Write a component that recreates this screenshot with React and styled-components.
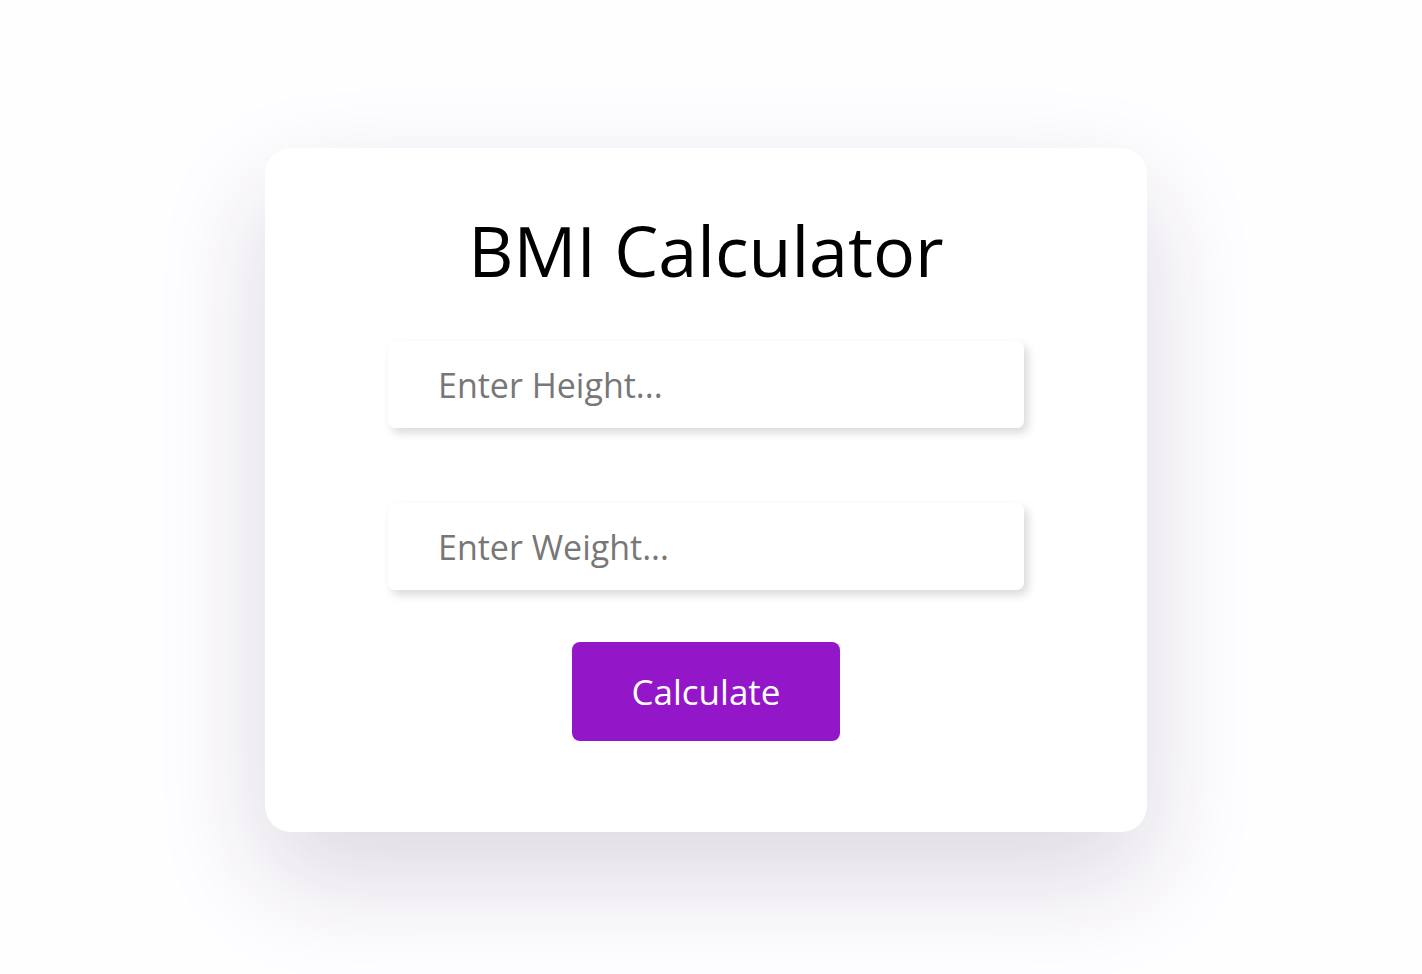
import React, { useState } from 'react'
import styled, { createGlobalStyle } from 'styled-components'

const GlobalStyle = createGlobalStyle`
  * {
    box-sizing: border-box;
  }

  body {
    margin: 0;
    background: #fefdff;
    font-family: "Open Sans", "Liberation Sans", sans-serif;
  }
`

const Page = styled.div`
  min-height: 100vh;
  display: flex;
  align-items: center;
  justify-content: center;
  padding: 6px 10px 0 0;
`

const Card = styled.div`
  width: 882px;
  height: 684px;
  background: #ffffff;
  border-radius: 26px;
  box-shadow: 0 45px 110px rgba(45, 30, 70, 0.16);
  display: flex;
  flex-direction: column;
  align-items: center;
  padding-top: 64px;
`

const Title = styled.h1`
  margin: 0 0 52px 0;
  font-size: 70px;
  line-height: 1.1;
  font-weight: 400;
  color: #000000;
`

const Form = styled.form`
  display: flex;
  flex-direction: column;
  align-items: center;
`

const Input = styled.input`
  width: 636px;
  height: 87px;
  border: none;
  outline: none;
  border-radius: 7px;
  background: #ffffff;
  padding: 0 50px;
  margin-bottom: ${props => props.$gap}px;
  font-family: inherit;
  font-size: 34px;
  color: #333;
  box-shadow: 4px 5px 10px rgba(0, 0, 0, 0.15);

  &::placeholder {
    color: #777777;
  }
`

const Button = styled.button`
  width: 268px;
  height: 99px;
  border: none;
  border-radius: 8px;
  background: #9317c9;
  color: #ffffff;
  font-family: inherit;
  font-size: 35px;
  cursor: pointer;
`

const App = () => {
  const [height, setHeight] = useState('')
  const [weight, setWeight] = useState('')

  const onSubmit = event => {
    event.preventDefault()
  }

  return (
    <>
      <GlobalStyle />
      <Page>
        <Card>
          <Title>BMI Calculator</Title>
          <Form onSubmit={onSubmit}>
            <Input
              type="text"
              placeholder="Enter Height..."
              value={height}
              onChange={e => setHeight(e.target.value)}
              $gap={75}
            />
            <Input
              type="text"
              placeholder="Enter Weight..."
              value={weight}
              onChange={e => setWeight(e.target.value)}
              $gap={52}
            />
            <Button type="submit">Calculate</Button>
          </Form>
        </Card>
      </Page>
    </>
  )
}

export default App
